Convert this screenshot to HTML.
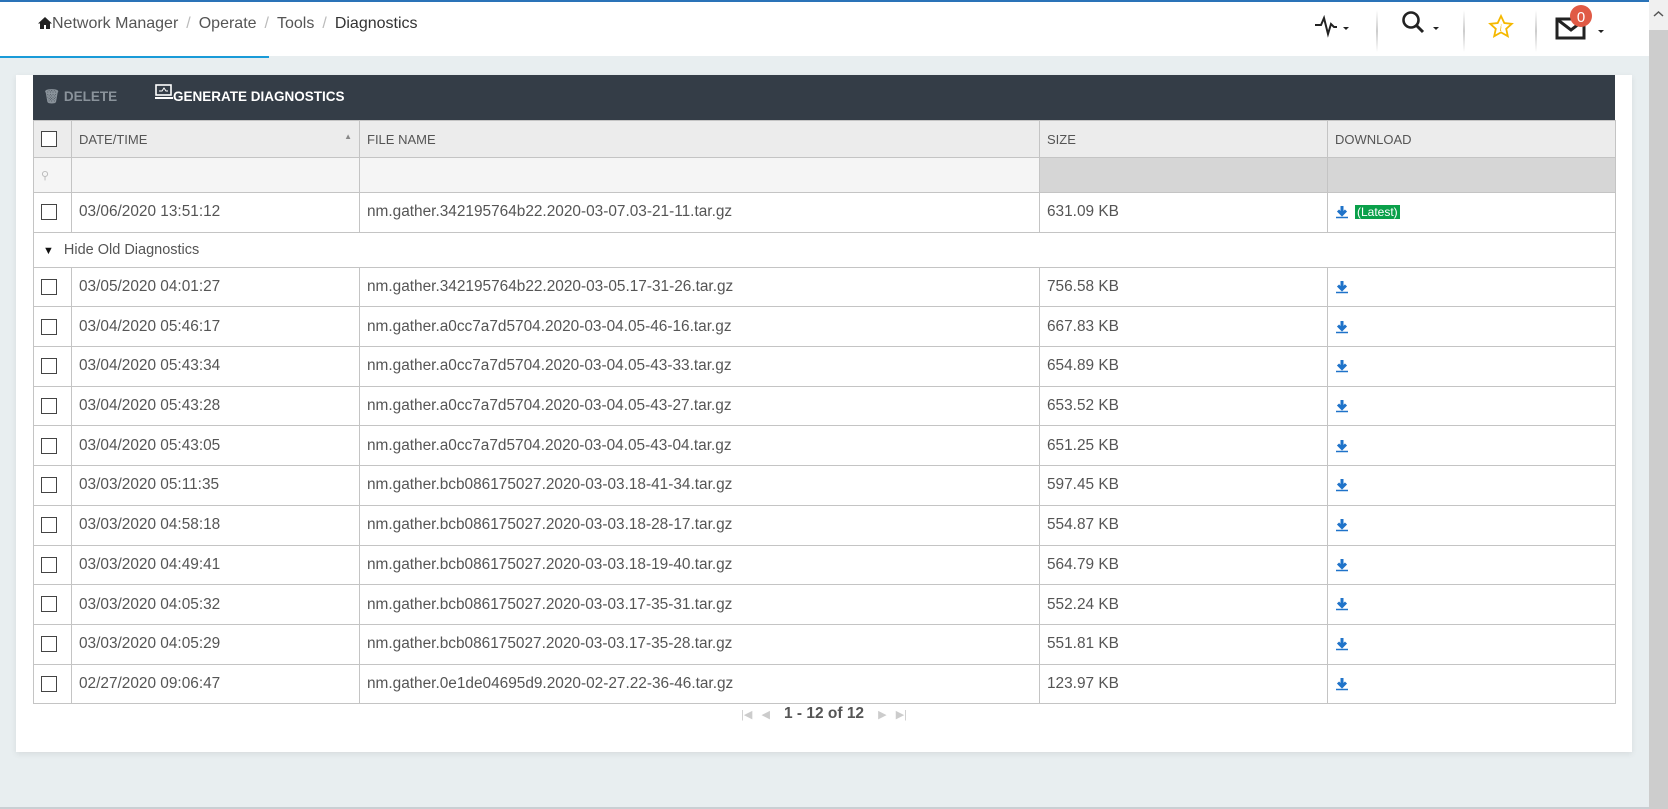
<!DOCTYPE html>
<html><head><meta charset="utf-8"><style>
*{box-sizing:border-box;margin:0;padding:0}
body{width:1668px;height:809px;overflow:hidden;background:#e8eef0;font-family:"Liberation Sans",sans-serif;color:#555;position:relative}
.hdr{position:absolute;left:0;top:0;width:1649px;height:56px;background:#fff;border-top:2px solid #2a73b8}
.hdr .ul{position:absolute;left:0;top:54px;width:269px;height:2px;background:#1a9bd8}
.bc{position:absolute;left:38px;top:13px;font-size:16px;color:#555}
.bc .s{color:#bbb;margin:0 8px}
.bc .c{color:#333}
.sep{position:absolute;top:8px;width:2px;height:42px;background:linear-gradient(#fff,#ccc,#fff)}
.sb{position:absolute;left:1649px;top:0;width:19px;height:809px;background:#cdcdcd}
.sb .up{position:absolute;top:0;left:0;width:19px;height:30px;background:#f0f0f0}
.panel{position:absolute;left:16px;top:75px;width:1616px;height:677px;background:#fff;box-shadow:0 2px 6px rgba(0,0,0,.08)}
.tb{position:absolute;left:17px;top:0;width:1582px;height:45px;background:#343d47;color:#fff;font-weight:bold;font-size:13.5px}
table{position:absolute;left:17px;top:45px;width:1583px;border-collapse:collapse;font-size:15.4px;table-layout:fixed}
td,th{border:1px solid #c4c4c4;padding:0 7px;text-align:left;white-space:nowrap}
th{background:#ececec;height:37px;font-weight:normal;font-size:13px;color:#555}
.f td{background:#f5f5f5;height:35px}
.f td.g{background:#d6d6d6}
tr.r td{height:39.7px}
.cb{display:inline-block;width:16px;height:16px;border:1px solid #444;background:#fff;vertical-align:middle}
.hide td{height:35px;border-left:1px solid #c4c4c4;border-right:1px solid #c4c4c4}
.lat{background:#0aa04a;color:#fff;font-size:12px;padding:0 2px;margin-left:6px}
.pg{position:absolute;top:630px;left:0;width:1616px;text-align:center;font-size:15.5px;font-weight:bold;color:#555}
.bl{position:absolute;left:0;top:807px;width:1649px;height:2px;background:#c9cfd3}
</style></head><body>
<div class="hdr"><div class="ul"></div>
<div class="bc"><svg width="14" height="13" style="vertical-align:-1px"><path d="M7 1L0 7.5h2V13h4V9h2v4h4V7.5h2z" fill="#222"/></svg>Network Manager<span class="s">/</span>Operate<span class="s">/</span>Tools<span class="s">/</span><span class="c">Diagnostics</span></div>
<svg style="position:absolute;left:1314px;top:12px" width="40" height="24"><path d="M1 11h6l3-7 4 16 3-10 3 3h3" fill="none" stroke="#222" stroke-width="2"/><path d="M29 13h6l-3 3z" fill="#222"/></svg>
<div class="sep" style="left:1376px"></div>
<svg style="position:absolute;left:1401px;top:8px" width="42" height="26"><circle cx="10" cy="10" r="7.5" fill="none" stroke="#222" stroke-width="2.6"/><path d="M15 15l7 7" stroke="#222" stroke-width="3"/><path d="M32 17h6l-3 3z" fill="#222"/></svg>
<div class="sep" style="left:1463px"></div>
<svg style="position:absolute;left:1488px;top:12px" width="26" height="26"><path d="M13 2l3.3 7 7.5.8-5.6 5 1.6 7.4L13 18.4l-6.8 3.8 1.6-7.4-5.6-5 7.5-.8z" fill="none" stroke="#f5b800" stroke-width="1.8"/><text x="11.5" y="17" font-size="9" font-style="italic" fill="#f5b800" font-family="Liberation Serif">i</text></svg>
<div class="sep" style="left:1535px"></div>
<svg style="position:absolute;left:1555px;top:2px" width="50" height="36"><rect x="2" y="15" width="27" height="19" fill="none" stroke="#222" stroke-width="3"/><path d="M3 16l13 10 13-10" fill="none" stroke="#222" stroke-width="3"/><path d="M43 26h6l-3 3z" fill="#222"/><circle cx="26" cy="12" r="11" fill="#e05a45"/><text x="26" y="18" text-anchor="middle" font-size="15" fill="#fff" font-family="Liberation Sans">0</text></svg>
</div>
<div class="sb"><div class="up"><svg width="19" height="30"><path d="M5 16l4.5-4 4.5 4" fill="none" stroke="#555" stroke-width="1.5"/></svg></div></div>
<div class="panel">
<div class="tb">
<span style="position:absolute;left:10px;top:14px;color:#8a939b">&#128465;&#xFE0E; DELETE</span>
<svg style="position:absolute;left:122px;top:9px" width="18" height="16"><rect x="1" y="1" width="15" height="10" fill="none" stroke="#fff" stroke-width="1.6"/><path d="M0 14h18" stroke="#fff" stroke-width="2"/><path d="M4 7h3l2-3 2 3h2" fill="none" stroke="#fff" stroke-width="1"/></svg>
<span style="position:absolute;left:140px;top:14px">GENERATE DIAGNOSTICS</span>
</div>
<table>
<colgroup><col style="width:38px"><col style="width:288px"><col style="width:680px"><col style="width:288px"><col></colgroup>
<tr><th><span class="cb"></span></th><th>DATE/TIME<span style="float:right;font-size:8px;color:#888">&#9650;<br></span></th><th>FILE NAME</th><th>SIZE</th><th>DOWNLOAD</th></tr>
<tr class="f"><td style="color:#bbb;font-size:11px">&#9906;</td><td></td><td></td><td class="g"></td><td class="g"></td></tr>
<tr class="r"><td><span class="cb"></span></td><td>03/06/2020 13:51:12</td><td>nm.gather.342195764b22.2020-03-07.03-21-11.tar.gz</td><td>631.09 KB</td><td><svg width="14" height="14" style="vertical-align:middle"><path d="M7 1v8M3 5.5l4 4 4-4" fill="none" stroke="#1f73c9" stroke-width="3"/><path d="M1 12.5h12" stroke="#1f73c9" stroke-width="1.5"/></svg><span class="lat">(Latest)</span></td></tr>
<tr class="hide"><td colspan="5" style="font-size:14.5px;padding-left:9px"><span style="font-size:11px;color:#111;margin-right:10px">&#9660;</span>Hide Old Diagnostics</td></tr>
<tr class="r"><td><span class="cb"></span></td><td>03/05/2020 04:01:27</td><td>nm.gather.342195764b22.2020-03-05.17-31-26.tar.gz</td><td>756.58 KB</td><td>D</td></tr>
<tr class="r"><td><span class="cb"></span></td><td>03/04/2020 05:46:17</td><td>nm.gather.a0cc7a7d5704.2020-03-04.05-46-16.tar.gz</td><td>667.83 KB</td><td>D</td></tr>
<tr class="r"><td><span class="cb"></span></td><td>03/04/2020 05:43:34</td><td>nm.gather.a0cc7a7d5704.2020-03-04.05-43-33.tar.gz</td><td>654.89 KB</td><td>D</td></tr>
<tr class="r"><td><span class="cb"></span></td><td>03/04/2020 05:43:28</td><td>nm.gather.a0cc7a7d5704.2020-03-04.05-43-27.tar.gz</td><td>653.52 KB</td><td>D</td></tr>
<tr class="r"><td><span class="cb"></span></td><td>03/04/2020 05:43:05</td><td>nm.gather.a0cc7a7d5704.2020-03-04.05-43-04.tar.gz</td><td>651.25 KB</td><td>D</td></tr>
<tr class="r"><td><span class="cb"></span></td><td>03/03/2020 05:11:35</td><td>nm.gather.bcb086175027.2020-03-03.18-41-34.tar.gz</td><td>597.45 KB</td><td>D</td></tr>
<tr class="r"><td><span class="cb"></span></td><td>03/03/2020 04:58:18</td><td>nm.gather.bcb086175027.2020-03-03.18-28-17.tar.gz</td><td>554.87 KB</td><td>D</td></tr>
<tr class="r"><td><span class="cb"></span></td><td>03/03/2020 04:49:41</td><td>nm.gather.bcb086175027.2020-03-03.18-19-40.tar.gz</td><td>564.79 KB</td><td>D</td></tr>
<tr class="r"><td><span class="cb"></span></td><td>03/03/2020 04:05:32</td><td>nm.gather.bcb086175027.2020-03-03.17-35-31.tar.gz</td><td>552.24 KB</td><td>D</td></tr>
<tr class="r"><td><span class="cb"></span></td><td>03/03/2020 04:05:29</td><td>nm.gather.bcb086175027.2020-03-03.17-35-28.tar.gz</td><td>551.81 KB</td><td>D</td></tr>
<tr class="r"><td><span class="cb"></span></td><td>02/27/2020 09:06:47</td><td>nm.gather.0e1de04695d9.2020-02-27.22-36-46.tar.gz</td><td>123.97 KB</td><td>D</td></tr>
</table>
<div class="pg"><span style="color:#ccc;font-weight:normal;font-size:11px;margin-right:14px">|&#9664; &nbsp; &#9664;</span>1 - 12 of 12<span style="color:#ccc;font-weight:normal;font-size:11px;margin-left:14px">&#9654; &nbsp; &#9654;|</span></div>
</div>
<div class="bl"></div>
<script>
document.querySelectorAll('td').forEach(function(t){if(t.textContent==='D'){t.innerHTML='<svg width="14" height="14" style="vertical-align:middle"><path d="M7 1v8M3 5.5l4 4 4-4" fill="none" stroke="#1f73c9" stroke-width="3"/><path d="M1 12.5h12" stroke="#1f73c9" stroke-width="1.5"/></svg>';}});
</script>
</body></html>
